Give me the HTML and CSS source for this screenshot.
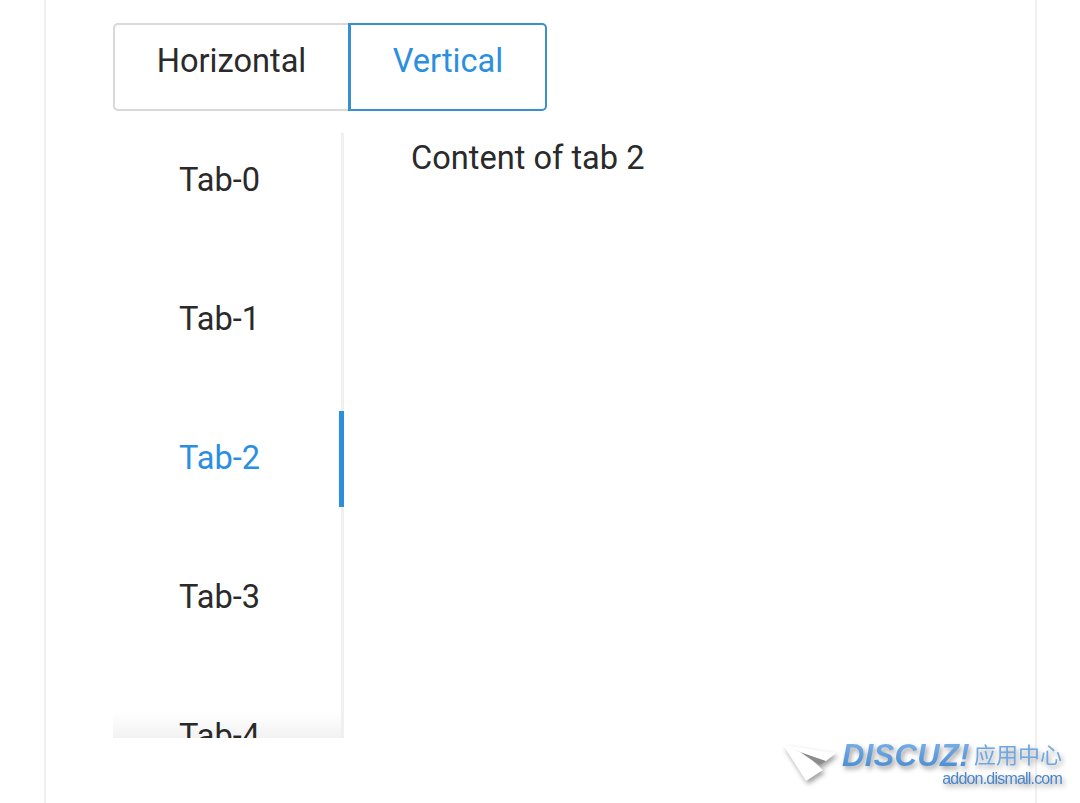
FILE: index.html
```html
<!DOCTYPE html>
<html lang="en">
<head>
    <meta charset="UTF-8">
    <title>Tabs</title>
    <meta name="viewport" content="width=device-width, initial-scale=1.0">
    <link rel="stylesheet" href="styles.css">
</head>
<body>

<div class="card">
    <div class="mode-switch">
        <div class="mode-btn">Horizontal</div>
        <div class="mode-btn mode-active">Vertical</div>
    </div>

    <div class="tabs">
        <div class="tab-nav">
            <div class="tab">Tab-0</div>
            <div class="tab">Tab-1</div>
            <div class="tab tab-active">Tab-2</div>
            <div class="tab">Tab-3</div>
            <div class="tab">Tab-4</div>
            <div class="tab-fade"></div>
        </div>
        <div class="tab-content">Content of tab 2</div>
    </div>
</div>

<div class="watermark">
    <svg class="wm-arrow" width="56" height="40" viewBox="0 0 56 40">
        <path d="M17 7 L43 16 L37 20 L30 16 Z" fill="#8c8c8c"/>
        <path d="M0 0 L53 8 L43 16 L17 7 Z" fill="#fff"/>
        <path d="M0 0 L17 7 L30 16 L40 25 L23 36 Z" fill="#fff"/>
    </svg>
    <div class="wm-text">
        <div class="wm-top">
            <span class="wm-brand">DISCUZ!</span>
            <span class="wm-cn">应用中心</span>
        </div>
        <div class="wm-url">addon.dismall.com</div>
    </div>
</div>

</body>
</html>
```

FILE: styles.css
```css
html, body {
    margin: 0;
    padding: 0;
    height: 100%;
    overflow: hidden;
    background: #fff;
}

body {
    font-family: Roboto, "Noto Sans", sans-serif;
    color: #2a2a2a;
    font-size: 32.6px;
}

.card {
    box-sizing: border-box;
    width: 993px;
    height: 803px;
    margin-left: 44px;
    padding: 23px 67px 0;
    border-left: 2px solid #f0f0f0;
    border-right: 2px solid #f0f0f0;
}

.mode-switch {
    display: flex;
    width: 434px;
    height: 88px;
}

.mode-btn {
    box-sizing: border-box;
    display: flex;
    align-items: center;
    justify-content: center;
    height: 88px;
    width: 235px;
    padding-bottom: 12px;
    border: 2px solid #d9d9d9;
    border-right: none;
    border-radius: 5px 0 0 5px;
}

.mode-active {
    width: 199px;
    color: #2b8fe0;
    border: 2px solid #3a8fd0;
    border-left-width: 3px;
    border-radius: 0 5px 5px 0;
}

.tabs {
    display: flex;
    height: 605px;
    margin-top: 22px;
}

.tab-nav {
    position: relative;
    flex: none;
    width: 231px;
    height: 605px;
    overflow: hidden;
    display: flex;
    flex-direction: column;
    gap: 43px;
}

/* divider on the right of the tab list */
.tab-nav::after {
    content: "";
    position: absolute;
    top: 0;
    right: 0;
    bottom: 0;
    width: 3px;
    background: #f0f0f0;
}

.tab {
    flex: none;
    box-sizing: border-box;
    display: flex;
    align-items: center;
    justify-content: center;
    height: 96px;
    padding: 0 18px 2px 0;
    position: relative;
}

.tab-active {
    color: #2b8fe0;
}

.tab-active::after {
    content: "";
    position: absolute;
    top: 0;
    right: 0;
    width: 5px;
    height: 96px;
    background: #2b8fe0;
    z-index: 1;
}

.tab-fade {
    position: absolute;
    left: 0;
    right: 0;
    bottom: 0;
    height: 26px;
    background: linear-gradient(to bottom, rgba(0, 0, 0, 0), rgba(0, 0, 0, 0.05));
}

.tab-content {
    padding-left: 67px;
    line-height: 50px;
}

.watermark {
    position: absolute;
    left: 783px;
    top: 745px;
    display: flex;
    align-items: flex-start;
    filter: drop-shadow(2px 3px 2.5px rgba(0, 0, 0, 0.38));
}

.wm-arrow {
    flex: none;
}

.wm-text {
    width: 220px;
    margin-left: 3px;
    margin-top: -4px;
}

.wm-top {
    display: flex;
    align-items: center;
    justify-content: space-between;
    height: 30px;
}

.wm-brand {
    flex: none;
    font-family: "Liberation Sans", sans-serif;
    font-weight: bold;
    font-style: italic;
    font-size: 31px;
    letter-spacing: 0.3px;
    background: linear-gradient(to bottom, #80b4ea, #3f85cf);
    -webkit-background-clip: text;
    background-clip: text;
    color: transparent;
}

.wm-cn {
    flex: none;
    white-space: nowrap;
    font-family: "Noto Sans CJK SC", sans-serif;
    font-size: 22px;
    line-height: 22px;
    margin-bottom: 7px;
    color: #6ea7e2;
}

.wm-url {
    font-family: "Liberation Sans", sans-serif;
    font-size: 16px;
    letter-spacing: -0.8px;
    color: #4a86c8;
    text-align: right;
    line-height: 16px;
}
```
